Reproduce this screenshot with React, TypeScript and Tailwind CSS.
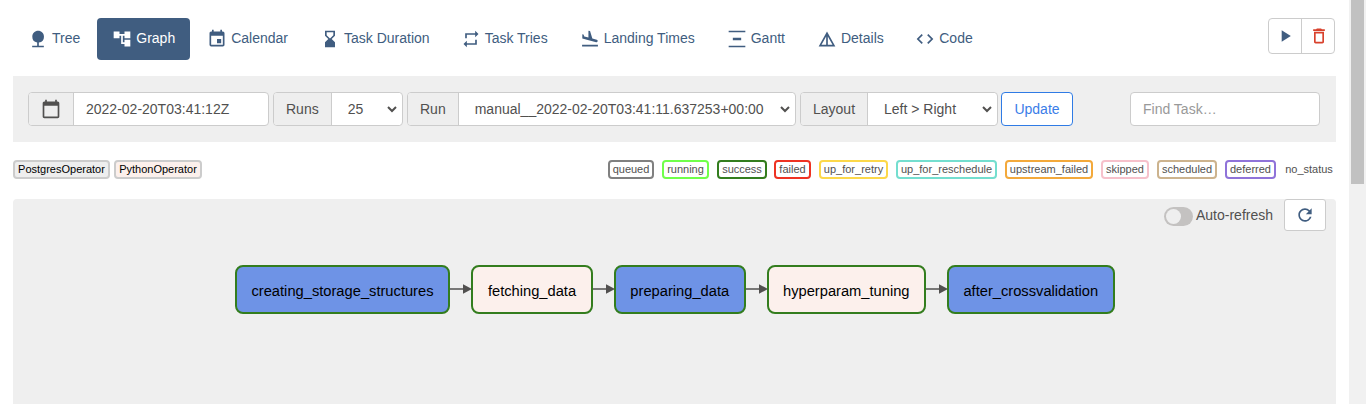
import type { ReactNode } from 'react';
import {
  MdAccountTree, MdCalendarToday, MdCode, MdDeleteOutline, MdDetails, MdEvent, MdFlightLand,
  MdHourglassBottom, MdNature, MdPlayArrow, MdRefresh, MdRepeat, MdVerticalDistribute,
} from 'react-icons/md';

const tabs = [
  { label: 'Tree', Icon: MdNature, style: 'text-[#405d80]' },
  { label: 'Graph', Icon: MdAccountTree, style: 'bg-[#405d80] text-white' },
  { label: 'Calendar', Icon: MdEvent, style: 'text-[#405d80]' },
  { label: 'Task Duration', Icon: MdHourglassBottom, style: 'text-[#405d80]' },
  { label: 'Task Tries', Icon: MdRepeat, style: '-ml-px text-[#405d80]' },
  { label: 'Landing Times', Icon: MdFlightLand, style: 'text-[#405d80]' },
  { label: 'Gantt', Icon: MdVerticalDistribute, style: 'text-[#405d80]' },
  { label: 'Details', Icon: MdDetails, style: 'text-[#405d80]' },
  { label: 'Code', Icon: MdCode, style: '-ml-[0.5px] text-[#405d80]' },
];

const states = [
  { name: 'queued', style: 'w-[46px] border-[#808080]' },
  { name: 'running', style: 'w-[47px] border-[#70ff4a] ml-2' },
  { name: 'success', style: 'w-[50px] border-[#337d1e] ml-2' },
  { name: 'failed', style: 'w-[37px] border-[#ee3323] ml-[7px]' },
  { name: 'up_for_retry', style: 'w-[69px] border-[#fcd84a] ml-2' },
  { name: 'up_for_reschedule', style: 'w-[101px] border-[#74decf] ml-2' },
  { name: 'upstream_failed', style: 'w-[88px] border-[#f3a93b] ml-2' },
  { name: 'skipped', style: 'w-[48px] border-[#f6c1cb] ml-2' },
  { name: 'scheduled', style: 'w-[60px] border-[#ccb38e] ml-2' },
  { name: 'deferred', style: 'w-[51px] border-[#8f73d9] ml-2' },
  { name: 'no_status', style: 'w-[54px] border-white ml-[6px]' },
];

const tasks = [
  { name: 'creating_storage_structures', style: 'w-[215px] bg-[#6e93e6]' },
  { name: 'fetching_data', style: 'w-[122px] bg-[#fcf0ec]' },
  { name: 'preparing_data', style: 'w-[131.5px] bg-[#6e93e6]' },
  { name: 'hyperparam_tuning', style: 'w-[159.5px] bg-[#fcf0ec]' },
  { name: 'after_crossvalidation', style: 'w-[167.5px] bg-[#6e93e6]' },
];

function Field({ label, children, className }: { label: ReactNode; children: ReactNode; className: string }) {
  return (
    <div className={`flex h-[34px] overflow-hidden rounded border border-[#ccc] bg-white ${className}`}>
      <span className="flex shrink-0 items-center border-r border-[#ccc] bg-[#eee] px-3">{label}</span>
      {children}
    </div>
  );
}

function Select({ value }: { value: string }) {
  return (
    <select className="mr-[2px] min-w-0 flex-1 bg-white px-3 text-[14px] text-[#51504f] outline-none">
      <option>{value}</option>
    </select>
  );
}

function Arrow() {
  return (
    <svg className="relative z-10 h-[10px] w-[23px] shrink-0" viewBox="0 0 23 10">
      <path d="M1 5h14" stroke="#51504f" strokeWidth="1.5" />
      <path d="M14 0.3L23 5L14 9.7z" fill="#51504f" />
    </svg>
  );
}

export default function App() {
  return (
    <div className="flex h-[404px] w-full overflow-hidden bg-white font-['Liberation_Sans',Arial,sans-serif] text-[14px] leading-5 text-[#51504f]">
      <main className="flex min-w-0 flex-1 flex-col pr-[13px] pl-[13px]">
        <header className="flex h-[76px] shrink-0 items-start justify-between pt-[18px]">
          <nav className="flex gap-[2px]">
            {tabs.map(({ label, Icon, style }) => (
              <a key={label} className={`flex h-[42px] gap-1 rounded px-[15px] pt-[10px] ${style}`}>
                <Icon className="mt-px size-5 shrink-0" />
                <span className="whitespace-nowrap">{label}</span>
              </a>
            ))}
          </nav>
          <div className="mr-px flex h-9 w-[67px] rounded border border-[#ccc]">
            <button className="flex w-[33px] items-center justify-center border-r border-[#ccc] text-[#405d80]">
              <MdPlayArrow className="size-5" />
            </button>
            <button className="flex flex-1 items-center justify-center text-[#d8412c]">
              <MdDeleteOutline className="ml-px size-5" />
            </button>
          </div>
        </header>

        <section className="flex h-[66px] shrink-0 items-center bg-[#efefef] pr-4 pl-[15px]">
          <Field label={<MdCalendarToday className="-mt-px size-5" />} className="w-[241px]">
            <input className="min-w-0 flex-1 px-3 outline-none" defaultValue="2022-02-20T03:41:12Z" />
          </Field>
          <Field label="Runs" className="ml-1 w-[130px]"><Select value="25" /></Field>
          <Field label="Run" className="ml-1 w-[389px]"><Select value="manual__2022-02-20T03:41:11.637253+00:00" /></Field>
          <Field label="Layout" className="ml-1 w-[198px]"><Select value="Left > Right" /></Field>
          <button className="ml-[3px] h-[34px] w-[72px] rounded border border-[#2f7be5] bg-white text-[#3a7de8]">Update</button>
          <input
            className="ml-auto h-[34px] w-[190px] rounded border border-[#ccc] bg-white px-3 outline-none placeholder:text-[#999]"
            placeholder="Find Task…"
          />
        </section>

        <section className="flex h-[57px] shrink-0 items-start justify-between pt-[18px] text-[11px] leading-[15px]">
          <div className="flex gap-1 text-black">
            <span className="flex h-[19px] w-[97px] justify-center rounded border-2 border-[#ccc] bg-[#eee]">PostgresOperator</span>
            <span className="flex h-[19px] w-[88px] justify-center rounded border-2 border-[#ccc] bg-[#fcf0ec]">PythonOperator</span>
          </div>
          <div className="flex">
            {states.map(({ name, style }) => (
              <span key={name} className={`flex h-[19px] justify-center rounded border-2 ${style}`}>{name}</span>
            ))}
          </div>
        </section>

        <section className="flex flex-1 flex-col rounded-t bg-[#efefef]">
          <div className="flex h-[66px] shrink-0 items-start justify-end pr-[10px]">
            <span className="mt-2 flex h-[19px] w-[29px] items-center rounded-full bg-[#c4c2c1] p-[2px]">
              <span className="size-[15px] rounded-full bg-[#efefef]" />
            </span>
            <span className="mt-[6px] ml-[3px] w-[88px] whitespace-nowrap">Auto-refresh</span>
            <button className="flex h-8 w-[42px] items-center justify-center rounded-[3px] border border-[#ccc] bg-white text-[#405d80]">
              <MdRefresh className="-mt-px -ml-px size-5" />
            </button>
          </div>
          <div className="flex items-center pl-[222px] text-[14.7px] text-black">
            {tasks.map(({ name, style }, i) => (
              <div key={name} className="flex items-center">
                {i > 0 && <div className="-mt-[2px] -mr-px -ml-px flex"><Arrow /></div>}
                <div className={`flex h-[49px] items-center justify-center rounded-[8px] border-2 border-[#337d1e] pt-[3px] ${style}`}>
                  {name}
                </div>
              </div>
            ))}
          </div>
        </section>
      </main>
      <aside className="flex w-[17px] shrink-0 justify-center bg-[#f1f1f1]">
        <div className="h-[184px] w-[13px] bg-[#c1c1c1]" />
      </aside>
    </div>
  );
}
